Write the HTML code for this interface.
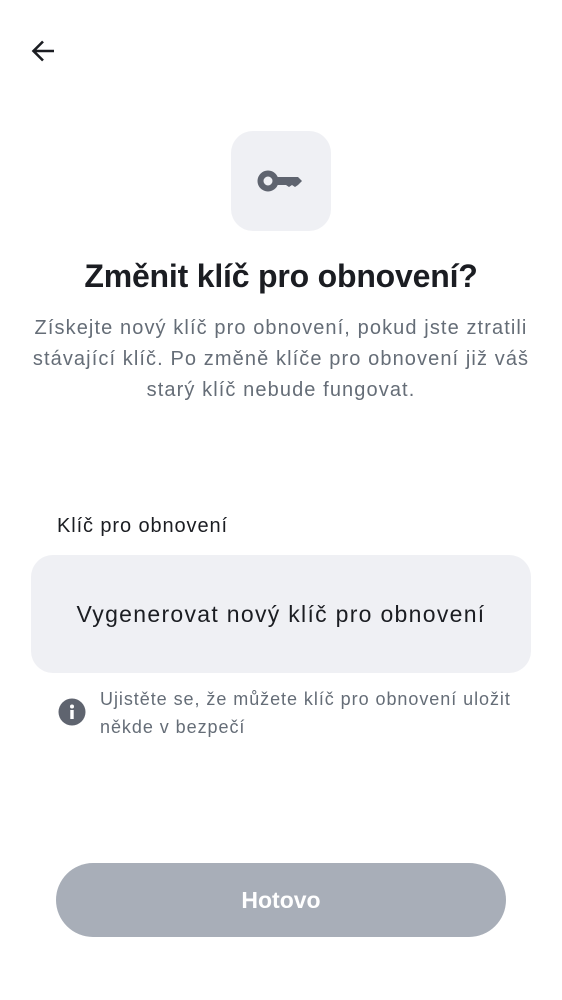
<!DOCTYPE html>
<html><head><meta charset="utf-8"><style>
body{margin:0;width:562px;height:1000px;background:#fff;font-family:"Liberation Sans",Roboto,sans-serif;position:relative;overflow:hidden}
.a{position:absolute}
</style></head><body>
<svg class="a" style="left:28px;top:36px" width="30" height="30" viewBox="0 0 30 30"><path d="M26 15H6M15 5.5L5.5 15 15 24.5" stroke="#1b1d22" stroke-width="2.6" fill="none"/></svg>
<div class="a" style="left:231px;top:131px;width:100px;height:100px;border-radius:22px;background:#eff0f4"></div>
<svg class="a" style="left:231px;top:131px" width="100" height="100" viewBox="0 0 100 100"><circle cx="37" cy="50" r="7.5" fill="none" stroke="#5f646f" stroke-width="6"/><path d="M43 46H67L71 50 67 54 64 56 61 54 58 56 55 54H43Z" fill="#5f646f"/></svg>
<div class="a" style="left:0;width:562px;top:258px;text-align:center;font-size:32px;font-weight:bold;color:#1b1d22;letter-spacing:-0.2px">Změnit klíč pro obnovení?</div>
<div class="a" style="left:21px;width:520px;top:313px;text-align:center;font-size:20px;line-height:31px;color:#656d77;letter-spacing:1.1px">Získejte nový klíč pro obnovení, pokud jste ztratili stávající klíč. Po změně klíče pro obnovení již váš starý klíč nebude fungovat.</div>
<div class="a" style="left:57px;top:515px;font-size:20px;color:#1b1d22;letter-spacing:0.9px">Klíč pro obnovení</div>
<div class="a" style="left:31px;top:555px;width:500px;height:118px;border-radius:22px;background:#eff0f4;text-align:center;line-height:118px;font-size:23px;color:#1b1d22;letter-spacing:1.3px">Vygenerovat nový klíč pro obnovení</div>
<svg class="a" style="left:58px;top:698px" width="28" height="28" viewBox="0 0 28 28"><circle cx="14" cy="14" r="13.5" fill="#5f646f"/><rect x="12.3" y="12" width="3.4" height="9" fill="#fff"/><circle cx="14" cy="8.5" r="2" fill="#fff"/></svg>
<div class="a" style="left:100px;top:685px;width:430px;font-size:18px;line-height:28px;color:#656d77;letter-spacing:0.95px">Ujistěte se, že můžete klíč pro obnovení uložit někde v bezpečí</div>
<div class="a" style="left:56px;top:863px;width:450px;height:74px;border-radius:37px;background:#a8aeb8;color:#fff;text-align:center;line-height:74px;font-size:23px;font-weight:bold">Hotovo</div>
</body></html>
